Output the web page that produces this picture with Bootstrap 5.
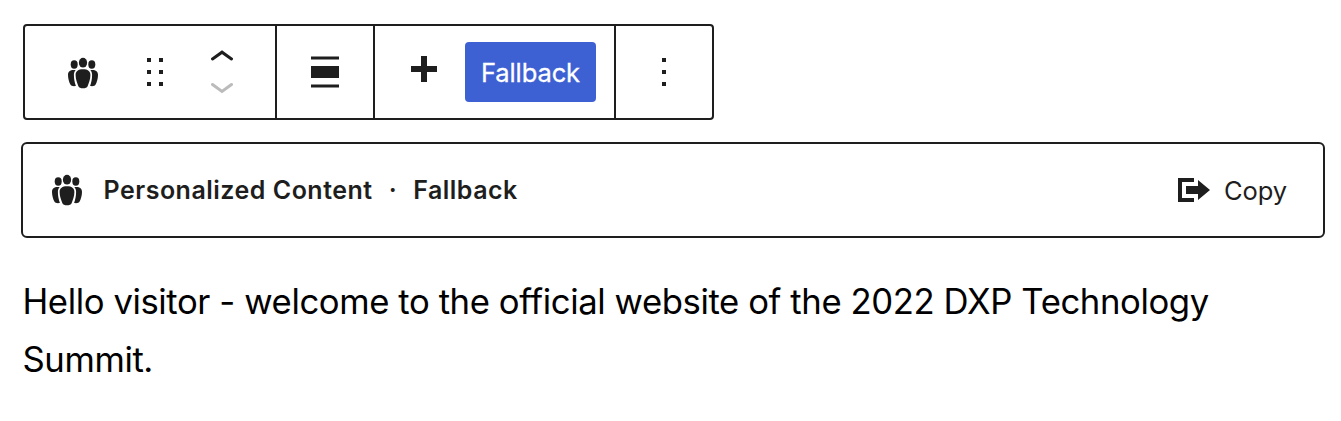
<!DOCTYPE html>
<html lang="en">
<head>
<meta charset="utf-8">
<meta name="viewport" content="width=device-width, initial-scale=1">
<title>Personalized Content block</title>
<link href="https://cdn.jsdelivr.net/npm/bootstrap@5.3.0/dist/css/bootstrap.min.css" rel="stylesheet">
<style>
  body { font-family: Inter, sans-serif; color: #1e1e1e; background: #fff; overflow: hidden; }
  .editor { padding: 24px 16px 0 21px; }
  svg { display: block; flex: none; fill: currentColor; }
  .toolbar { width: 691px; height: 96px; margin-left: 2px; border: 2px solid #1e1e1e; border-radius: 4px; }
  .segment { flex: none; border-right: 2px solid #1e1e1e; }
  .segment:last-child { border-right: 0; }
  .seg-block { width: 252px; padding-left: 42px; }
  .seg-narrow { width: 98px; }
  .seg-narrow:last-child { width: 96px; }
  .seg-insert { width: 241px; padding-left: 36px; }
  .block-icon { margin-top: 1px; }
  .btn-variant { --bs-btn-color: #fff; --bs-btn-bg: #3d61d2; width: 131px; height: 60px; padding: 2px 0 0; margin-left: 28px; border: 0; border-radius: 4px; font-size: 25.5px; line-height: 1; letter-spacing: -.1px; -webkit-text-stroke: .3px #fff; }
  .block-header { height: 96px; margin-top: 22px; padding: 0 36px 0 28px; border: 2px solid #1e1e1e; border-radius: 6px; }
  .block-title { font-size: 25px; font-weight: 600; line-height: 1; letter-spacing: .5px; margin-left: 20.5px; }
  .separator { width: 40.5px; text-align: center; }
  .copy-label { font-size: 25.5px; line-height: 1; margin: 2px 0 0 14px; letter-spacing: -.1px; }
  .message { margin: 34px 0 0 1.5px; font-size: 34.7px; line-height: 58px; letter-spacing: -.41px; color: #000; white-space: nowrap; }
</style>
</head>
<body>
<svg width="0" height="0" class="position-absolute" aria-hidden="true">
  <symbol id="people" viewBox="0 0 32 32">
    <ellipse cx="16" cy="5.7" rx="4.1" ry="4.9"/>
    <ellipse cx="7.2" cy="7.5" rx="3.5" ry="4.2"/>
    <ellipse cx="24.8" cy="7.5" rx="3.5" ry="4.2"/>
    <path d="M16 12.200c4.700 0 7.400 1.800 7.400 5.700 0 4.300-1.600 8.200-2.800 11.300-.6 1.500-2.300 2-4.600 2s-4-.5-4.600-2c-1.200-3.100-2.800-7-2.800-11.300 0-3.900 2.700-5.700 7.400-5.700z"/>
    <path id="side" d="M8.700 13.100C3.700 12.400 1 14.200 1 17.900c0 3.800 1.200 7.200 2.400 9.700.7 1.400 2.800 1.800 5.500 1.400C7.700 26 6.900 22 6.900 18.100c0-2.200.6-3.800 1.800-5z"/>
    <use href="#side" transform="matrix(-1 0 0 1 32 0)"/>
  </symbol>
</svg>
<main class="editor">
  <div class="toolbar d-flex" role="toolbar" aria-label="Block tools">
    <div class="segment seg-block d-flex align-items-center">
      <svg class="block-icon" width="32" height="32"><use href="#people"/></svg>
      <svg class="ms-5" width="16" height="28" shape-rendering="crispEdges"><path d="M0 0h4v4H0zM12 0h4v4h-4zM0 12h4v4H0zM12 12h4v4h-4zM0 24h4v4H0zM12 24h4v4h-4z"/></svg>
      <svg class="ms-5" width="22" height="46" stroke-width="3" stroke-linecap="round" style="fill:none"><path d="M1.500 10 11 3.200l9.500 6.800" stroke="#1e1e1e"/><path d="M1.500 35.500 11 42.500l9.500-7" stroke="#bbb"/></svg>
    </div>
    <div class="segment seg-narrow d-flex align-items-center justify-content-center">
      <svg width="28" height="32"><path d="M0 .5h28v3H0zM0 10h28v12H0zM0 28.500h28v3H0z"/></svg>
    </div>
    <div class="segment seg-insert d-flex align-items-center">
      <svg class="mb-1" width="26" height="28"><path d="M10 0h6v10h10v6H16v10h-6V16H0v-6h10z"/></svg>
      <button type="button" class="btn btn-variant">Fallback</button>
    </div>
    <div class="segment seg-narrow d-flex align-items-center justify-content-center">
      <svg width="4" height="28"><path d="M0 0h4v4H0zM0 12h4v4H0zM0 24h4v4H0z"/></svg>
    </div>
  </div>
  <header class="block-header d-flex align-items-center">
    <svg width="32" height="32"><use href="#people"/></svg>
    <div class="block-title d-flex"><span>Personalized Content</span><span class="separator">·</span><span>Fallback</span></div>
    <div class="d-flex align-items-center ms-auto">
      <svg width="32" height="24"><path d="M0 0h16v4H4v16h12v4H0zM8 8h12V2l12 10-12 10v-6H8z"/></svg>
      <span class="copy-label">Copy</span>
    </div>
  </header>
  <p class="message">Hello visitor - welcome to the official website of the 2022 DXP Technology<br>Summit.</p>
</main>
<script src="https://cdn.jsdelivr.net/npm/bootstrap@5.3.0/dist/js/bootstrap.bundle.min.js"></script>
</body>
</html>
